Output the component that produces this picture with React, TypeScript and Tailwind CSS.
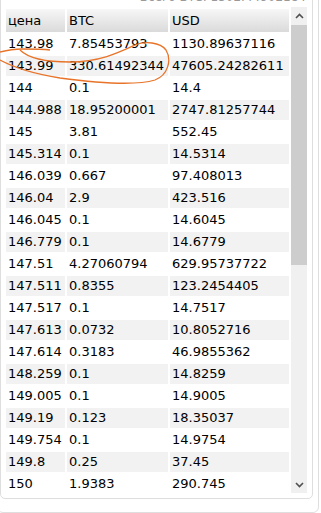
const rows: [string, string, string][] = [
  ['143.98', '7.85453793', '1130.89637116'],
  ['143.99', '330.61492344', '47605.24282611'],
  ['144', '0.1', '14.4'],
  ['144.988', '18.95200001', '2747.81257744'],
  ['145', '3.81', '552.45'],
  ['145.314', '0.1', '14.5314'],
  ['146.039', '0.667', '97.408013'],
  ['146.04', '2.9', '423.516'],
  ['146.045', '0.1', '14.6045'],
  ['146.779', '0.1', '14.6779'],
  ['147.51', '4.27060794', '629.95737722'],
  ['147.511', '0.8355', '123.2454405'],
  ['147.517', '0.1', '14.7517'],
  ['147.613', '0.0732', '10.8052716'],
  ['147.614', '0.3183', '46.9855362'],
  ['148.259', '0.1', '14.8259'],
  ['149.005', '0.1', '14.9005'],
  ['149.19', '0.123', '18.35037'],
  ['149.754', '0.1', '14.9754'],
  ['149.8', '0.25', '37.45'],
  ['150', '1.9383', '290.745'],
];

function Chevron({ down }: { down?: boolean }) {
  return (
    <svg width="9" height="6" viewBox="0 0 9 6" className={down ? 'rotate-180' : ''}>
      <path d="M1 5 L4.5 1.5 L8 5" fill="none" stroke="#505050" strokeWidth="1.6" />
    </svg>
  );
}

export default function App() {
  return (
    <div className="relative w-[321px] h-[513px] overflow-hidden bg-white font-['Verdana','DejaVu_Sans',sans-serif] text-black">
      {/* outer panel */}
      <div className="ml-[-3px] mt-[-25px] w-[322px] h-[538px] border border-[#dedede] rounded-[6px]">
        {/* inner panel */}
        <div className="ml-[2px] mt-[10px] w-[313px] h-[513px] border border-[#dedede] rounded-[5px]">
          <div className="h-[20px] leading-[20px] text-right pr-[6px] text-[12px] text-[#999]">
            Всего BTC: 1302.44902184
          </div>
          <div className="flex ml-[3px] h-[486px] overflow-hidden">
            <div className="w-[287px] overflow-hidden">
              <table className="table-fixed border-separate border-spacing-[2px] w-[287px] text-[13px]">
                <colgroup>
                  <col className="w-[59px]" />
                  <col className="w-[101px]" />
                  <col className="w-[119px]" />
                </colgroup>
                <thead>
                  <tr className="h-[23px]">
                    {['цена', 'BTC', 'USD'].map((h) => (
                      <th key={h} className="text-left font-normal pl-[2px] bg-gradient-to-b from-[#f7f7f7] to-[#dadada]">
                        {h}
                      </th>
                    ))}
                  </tr>
                </thead>
                <tbody>
                  {rows.map((r, i) => (
                    <tr key={r[0]} className="h-[20px]">
                      {r.map((c, j) => (
                        <td
                          key={j}
                          className={`pl-[2px] whitespace-nowrap leading-[20px] ${i % 2 === 1 ? 'bg-[#f2f2f2]' : ''}`}
                        >
                          {c}
                        </td>
                      ))}
                    </tr>
                  ))}
                </tbody>
              </table>
            </div>
            {/* scrollbar */}
            <div className="w-[16px] flex flex-col bg-[#f0f0f0]">
              <div className="h-[18px] flex items-center justify-center">
                <Chevron />
              </div>
              <div className="h-[240px] bg-[#cdcdcd]" />
              <div className="flex-1" />
              <div className="h-[17px] flex items-center justify-center">
                <Chevron down />
              </div>
            </div>
          </div>
        </div>
      </div>

      {/* hand-drawn annotation */}
      <svg className="absolute left-0 top-0 pointer-events-none" width="321" height="120" viewBox="0 0 321 120">
        <path d="M0 52 C8 50 15 49 22 49 C32 49 42 49 50 50" fill="none" stroke="#e8742a" strokeWidth="1.3" />
        <path
          d="M20 50 C28 58 45 62 70 62 C100 62 120 52 135 45 C145 41 160 42 166 50 C172 60 168 75 155 80 C135 86 90 82 60 78 C35 74 15 68 0 60"
          fill="none"
          stroke="#e8742a"
          strokeWidth="1.3"
        />
      </svg>
    </div>
  );
}
